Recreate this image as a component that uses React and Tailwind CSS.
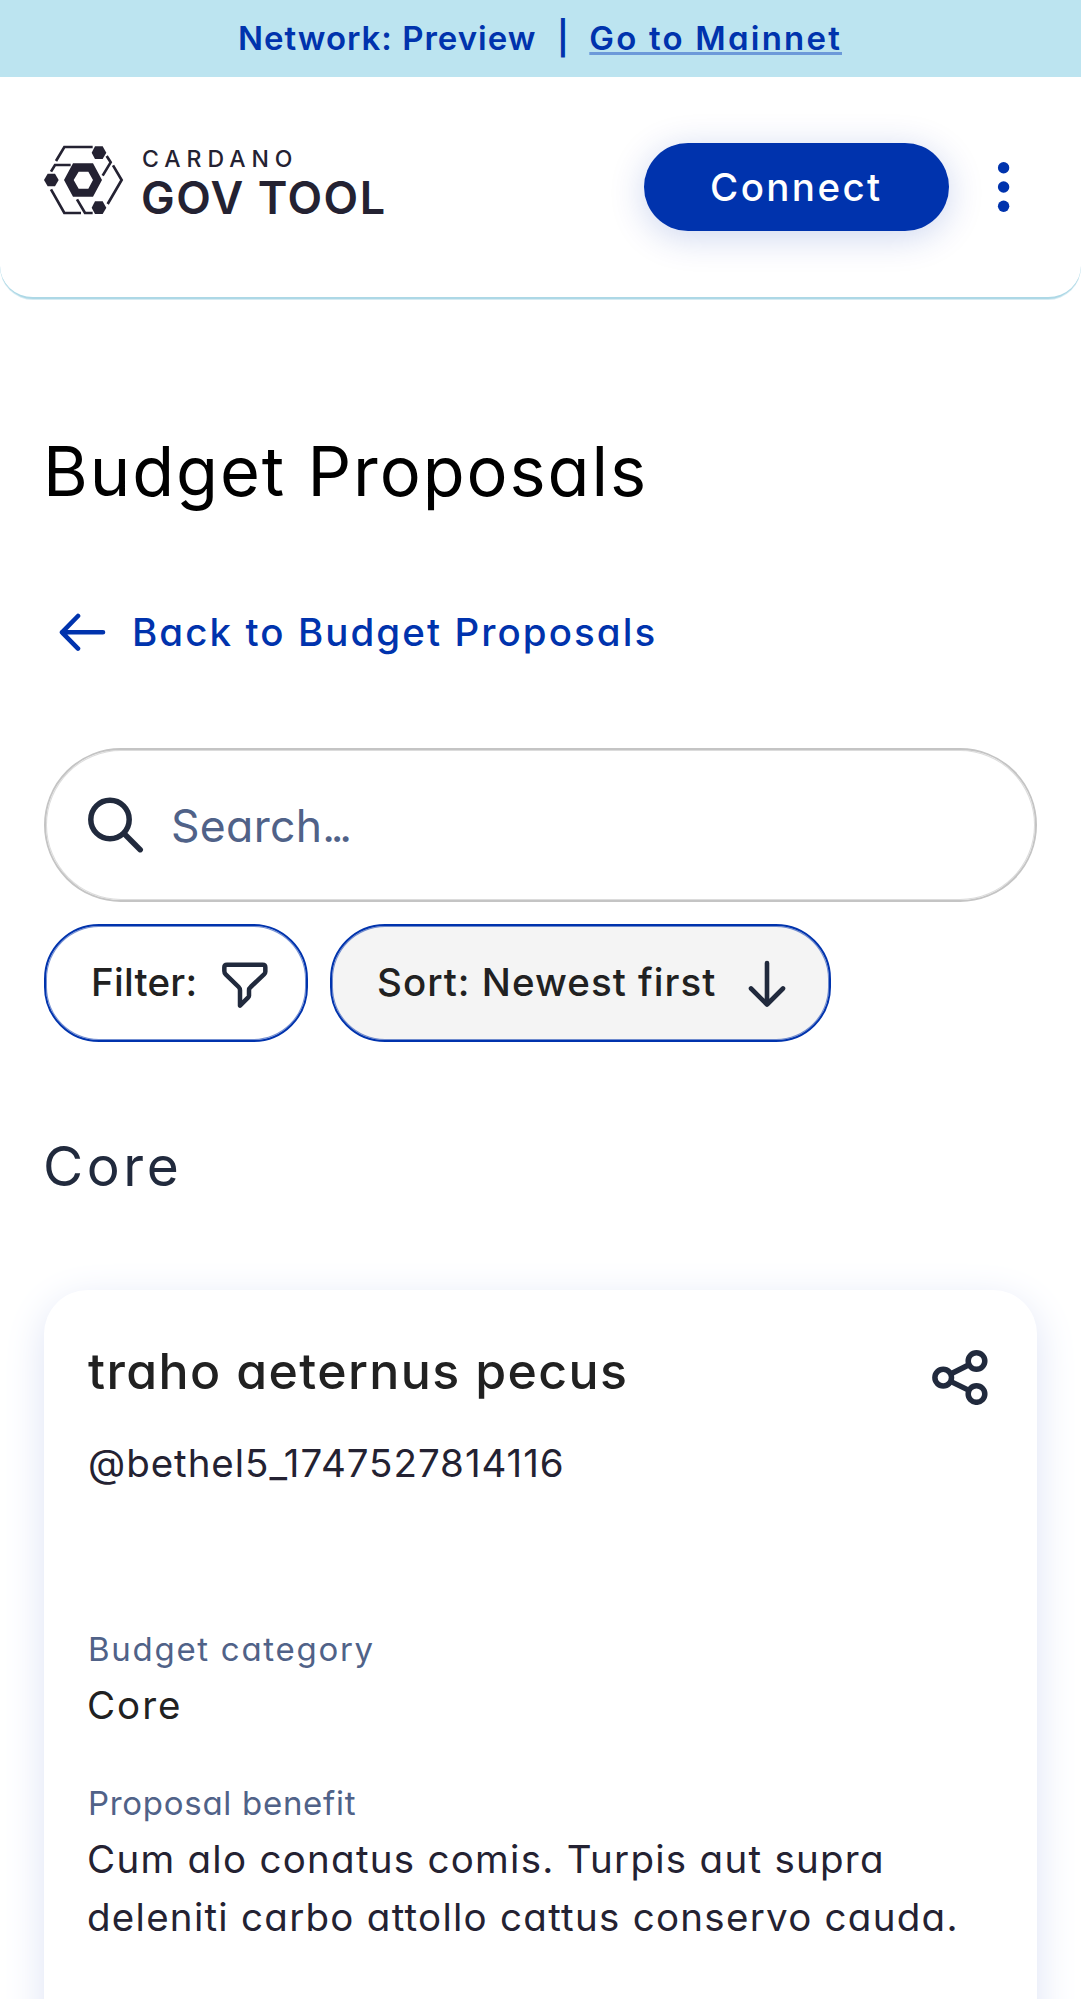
function Logo() {
  return (
    <svg className="ml-[40px] mt-[63px] h-[80px] w-[90px] shrink-0" viewBox="0 0 270 240" fill="none">
      <path
        fill="#242232"
        fillRule="evenodd"
        d="M72 120L99 70H159L186 120L159 170H99ZM101 120L116 146H145L159 120L145 95H116Z"
      />
      <g fill="#242232">
        <path d="M155 38L165 19H188L199 38L188 57H165Z" />
        <path d="M12 120L23 101H45L56 120L45 139H23Z" />
        <path d="M155 203L165 184H188L199 203L188 222H165Z" />
      </g>
      <g stroke="#242232" strokeWidth="8">
        <path d="M48 63L73 21H158" />
        <path d="M33 95L45 75H92" />
        <path d="M33 148L73 219H123" />
        <path d="M111 178L135 219H158" />
        <path d="M200 48L212 67L188 107" />
        <path d="M219 76L245 120L203 192" />
      </g>
    </svg>
  );
}

function Header() {
  return (
    <header className="flex h-[222px] items-start rounded-b-[33px] border-b-2 border-[#add8e6] bg-white shadow-[0_1px_0_rgba(173,216,230,0.5)]">
      <Logo />
      <div className="ml-[12px] mt-[67px] whitespace-nowrap text-[#242232]">
        <div className="text-[23px] font-medium leading-[30px] tracking-[5.95px]">CARDANO</div>
        <div className="-ml-px mt-px text-[45px] font-semibold leading-[46px] tracking-[1.5px]">GOV TOOL</div>
      </div>
      <button className="ml-auto mt-[66px] h-[88px] w-[305px] rounded-full bg-[#0033ad] pl-[66px] text-left text-[38.5px] font-medium leading-[88px] tracking-[2.4px] text-white shadow-[0_6px_36px_rgba(0,51,173,0.2)]">
        Connect
      </button>
      <svg className="ml-[48px] mr-[71px] mt-[83px] h-[54px] w-[13px]" viewBox="0 0 13 54" fill="#0033ad">
        <circle cx="6.6" cy="7.7" r="5.7" />
        <circle cx="6.6" cy="27" r="5.7" />
        <circle cx="6.6" cy="46.3" r="5.7" />
      </svg>
    </header>
  );
}

function SearchIcon() {
  return (
    <svg className="h-[56px] w-[56px] shrink-0" viewBox="0 0 56 56" fill="none" stroke="#212a3d" strokeWidth="5.5" strokeLinecap="round">
      <circle cx="22" cy="22.5" r="19.2" />
      <path d="M36.5 37L52.2 52.7" />
    </svg>
  );
}

function FilterIcon() {
  return (
    <svg className="h-[65px] w-[60px] shrink-0" viewBox="0 0 180 195" fill="none" stroke="#212a3d" strokeWidth="13.5" strokeLinejoin="round">
      <path d="M36 41H143Q151 41 151 49V62Q151 66 147 70L107 108Q102 112 102 118V134Q102 137 99 140L75 164V118Q75 112 71 108L32 70Q28 66 28 60V49Q28 41 36 41Z" />
    </svg>
  );
}

function ShareIcon() {
  return (
    <svg className="mt-[8px] h-[56px] w-[56px] shrink-0" viewBox="0 0 56 56" fill="none" stroke="#212a3d" strokeWidth="5.5">
      <circle cx="11.2" cy="28.6" r="8.3" />
      <circle cx="44.5" cy="12" r="8.3" />
      <circle cx="44.5" cy="45" r="8.3" />
      <path d="M18.6 25L37 15.7M18.6 32.4L37 41.4" />
    </svg>
  );
}

function Card() {
  return (
    <article className="mt-[92px] h-[900px] rounded-[44px] bg-white pl-[44px] pt-[51px] shadow-[0_11px_41px_#dde3f5]">
      <div className="flex justify-between pr-[49px]">
        <h3 className="whitespace-nowrap text-[50px] font-medium leading-[60px] tracking-[1.38px] text-[#212121]">
          traho aeternus pecus
        </h3>
        <ShareIcon />
      </div>
      <p className="mt-[35px] text-[38.5px] leading-[46px] tracking-[0.96px] text-[#242232]">@bethel5_1747527814116</p>
      <div className="mt-[143px] text-[33px] leading-[40px] tracking-[1.71px] text-[#506288]">Budget category</div>
      <div className="-ml-px mt-[7px] text-[38.5px] leading-[58px] tracking-[2px] text-[#212121]">Core</div>
      <div className="mt-[49px] text-[33px] leading-[40px] tracking-[0.71px] text-[#506288]">Proposal benefit</div>
      <p className="-ml-px mt-[7px] whitespace-nowrap text-[38.5px] leading-[58px] tracking-[1.27px] text-[#242232]">
        Cum alo conatus comis. Turpis aut supra
        <br />
        deleniti carbo attollo cattus conservo cauda.
      </p>
    </article>
  );
}

export default function App() {
  return (
    <div className="h-[1999px] w-[1081px] overflow-hidden bg-white font-['Inter',sans-serif] [font-feature-settings:'cv11']">
      <div className="flex h-[77px] whitespace-nowrap bg-[#bce4f0] pl-[238px] text-[33px] font-semibold leading-[77px] text-[#0033ad]">
        <span className="tracking-[0.98px]">Network: Preview</span>
        <span className="w-[53px] text-center">|</span>
        <a className="tracking-[2.2px] underline decoration-[#6c99d9] decoration-[3px] underline-offset-[2px]">Go to Mainnet</a>
      </div>
      <Header />
      <main className="px-[44px] pt-[132px]">
        <h1 className="-ml-px whitespace-nowrap pt-px text-[68.5px] leading-[80px] tracking-[1.93px] text-black">Budget Proposals</h1>
        <a className="mt-[90px] flex h-[60px] items-center pl-[15px] text-[38.5px] font-medium leading-[60px] tracking-[2.07px] text-[#0033ad]">
          <svg className="h-[40px] w-[47px]" viewBox="0 0 47 40" fill="none" stroke="#0033ad" strokeWidth="4.6" strokeLinecap="round" strokeLinejoin="round">
            <path d="M44 20.3H3M19 4L3 20.3L19 36.6" />
          </svg>
          <span className="ml-[26px]">Back to Budget Proposals</span>
        </a>
        <div className="mt-[86px] flex h-[154px] w-[993px] items-center rounded-full border-2 border-[#c4c4c4] pl-[42px] shadow-[inset_0_0_0_1px_rgba(196,196,196,0.6)]">
          <SearchIcon />
          <span className="ml-[27px] pt-px text-[44.5px] leading-[60px] tracking-[0.3px] text-[#506288]">
            Search<span className="tracking-[-4.3px]">...</span>
          </span>
        </div>
        <div className="mt-[22px] flex gap-[22px] text-[38.5px] font-medium text-[#212121]">
          <button className="flex h-[118px] w-[264px] items-center rounded-[55px] border-2 border-[#0033ad] pl-[45px] shadow-[inset_0_0_0_1px_rgba(0,51,173,0.55)]">
            <span className="w-[124px] text-left tracking-[0.27px]">Filter:</span>
            <FilterIcon />
          </button>
          <button className="flex h-[118px] w-[501px] items-center whitespace-nowrap rounded-[55px] border-2 border-[#0033ad] bg-[#f4f4f4] pl-[45px] shadow-[inset_0_0_0_1px_rgba(0,51,173,0.55)]">
            <span className="w-[371px] text-left tracking-[1.02px]">Sort: Newest first</span>
            <svg className="h-[47px] w-[38px]" viewBox="0 0 38 47" fill="none" stroke="#212a3d" strokeWidth="4.6" strokeLinecap="round" strokeLinejoin="round">
              <path d="M19 3V44.5M3 28.5L19 44.5L35 28.5" />
            </svg>
          </button>
        </div>
        <h2 className="-ml-px mt-[92px] text-[55px] leading-[64px] tracking-[3.6px] text-[#212a3d]">Core</h2>
        <Card />
      </main>
    </div>
  );
}
